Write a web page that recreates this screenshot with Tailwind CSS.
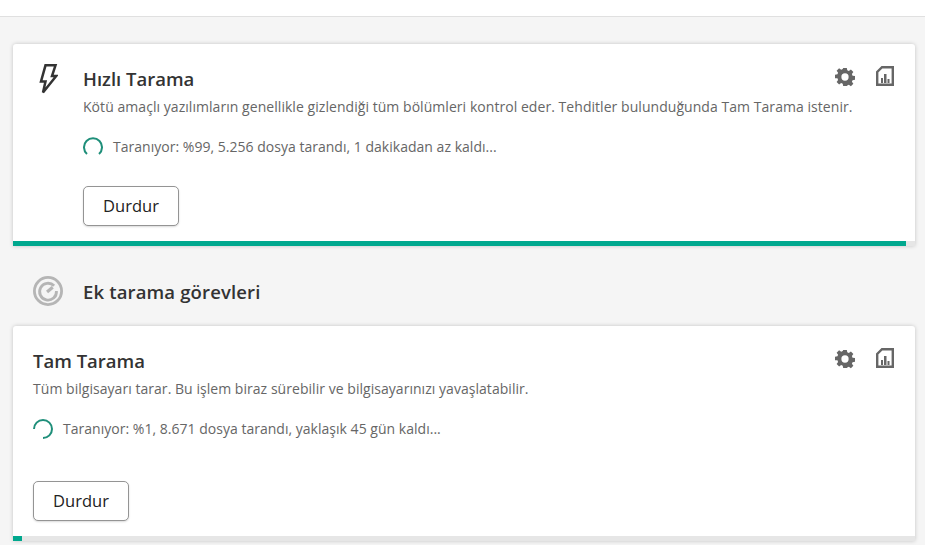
<!DOCTYPE html>
<html lang="tr">
<head>
  <meta charset="UTF-8">
  <title>Tarama</title>
  <script src="https://cdn.jsdelivr.net/npm/@tailwindcss/browser@4"></script>
</head>
<body class="h-[545px] w-[925px] overflow-hidden bg-[#f5f5f5] font-['Open_Sans',sans-serif]">

  <!-- Top bar -->
  <div class="h-[17px] border-b border-[#e0e0e0] bg-white"></div>

  <div class="pl-[13px] pr-[10px] pt-[27px]">

    <!-- Quick scan card -->
    <div class="flex h-[202px] flex-col rounded-t-[3px] bg-white shadow-[0_0_4px_rgba(0,0,0,0.2)]">
      <div class="flex flex-1 pl-[20px] pr-[21px]">
        <div class="w-[50px] pt-[20px]">
          <svg class="ml-[5px] h-[30px] w-[20px]" viewBox="0 0 20 30" fill="none" stroke="#333" stroke-width="2.5" stroke-linejoin="miter">
            <path d="M7.500 1.300h10L14 12h4.200L5 28.500l2.500-11H3z"/>
          </svg>
        </div>
        <div class="flex-1">
          <div class="flex items-start justify-between pt-[20px]">
            <h2 class="text-[18.500px] leading-[30px] font-[550] text-[#333]">Hızlı Tarama</h2>
            <div class="flex items-start gap-[21px] pt-[2px]">
              <svg class="mt-[1px] h-[20px] w-[20px]" viewBox="0 0 22 22" fill="#666">
                <path fill-rule="evenodd" d="M9 1h4l.5 2.700 1.700.7 2.300-1.600 2.700 2.700-1.600 2.300.7 1.700 2.700.5v4l-2.700.5-.7 1.700 1.600 2.300-2.700 2.700-2.300-1.600-1.700.7L13 21H9l-.5-2.700-1.700-.7-2.300 1.600-2.700-2.700 1.600-2.300-.7-1.700L0 12.500v-4l2.700-.5.7-1.700-1.600-2.300 2.700-2.700 2.300 1.600 1.700-.7zM11 7a4 4 0 1 0 0 8 4 4 0 0 0 0-8z"/>
              </svg>
              <svg class="h-[20px] w-[18px]" viewBox="0 0 18 20" fill="none">
                <path d="M6 1.200h10.800v17.600H1.200V6z" stroke="#666" stroke-width="2.400"/>
                <path d="M5 12h2v5H5zM8 8h2.500v9H8zM11.500 13h2v4h-2z" fill="#666"/>
              </svg>
            </div>
          </div>
          <p class="mt-[3px] text-[14px] leading-[20px] tracking-[0.05px] text-[#666]">Kötü amaçlı yazılımların genellikle gizlendiği tüm bölümleri kontrol eder. Tehditler bulunduğunda Tam Tarama istenir.</p>
          <div class="mt-[20px] flex items-center gap-[10px]">
            <svg class="h-[20px] w-[20px]" viewBox="0 0 20 20" fill="none" stroke="#1f8f7a" stroke-width="2">
              <path d="M4 17A9 9 0 1 1 16 17"/>
            </svg>
            <span class="text-[14px] leading-[20px] tracking-[0.02px] text-[#666]">Taranıyor: %99, 5.256 dosya tarandı, 1 dakikadan az kaldı...</span>
          </div>
          <button class="mt-[29px] h-[40px] w-[96px] rounded-[5px] border border-[#949494] bg-white text-[16.500px] font-medium text-[#222] shadow-[0_1px_2px_rgba(0,0,0,0.15)]">Durdur</button>
        </div>
      </div>
      <div class="h-[5px] bg-[#e6e6e6]">
        <div class="h-full w-[893px] bg-[#00a88e]"></div>
      </div>
    </div>

    <!-- Additional scans heading -->
    <div class="flex h-[80px] items-center pl-[20px] pt-[10px]">
      <div class="w-[50px]">
        <svg class="h-[30px] w-[30px]" viewBox="0 0 32 32" fill="none" stroke="#b5b5b5" stroke-width="3">
          <circle cx="16" cy="16" r="14.500"/>
          <path d="M22.500 10.500A9 9 0 1 0 25 16"/>
          <path d="M15 17l6-5" stroke-width="3.500"/>
        </svg>
      </div>
      <h2 class="mt-[2px] text-[18.500px] font-[550] tracking-[0.15px] text-[#333]">Ek tarama görevleri</h2>
    </div>

    <!-- Full scan card -->
    <div class="flex h-[215px] flex-col rounded-t-[3px] bg-white shadow-[0_0_4px_rgba(0,0,0,0.2)]">
      <div class="flex-1 pl-[20px] pr-[21px]">
        <div class="flex items-start justify-between pt-[20px]">
          <h2 class="text-[18.500px] leading-[30px] font-[550] text-[#333]">Tam Tarama</h2>
          <div class="flex items-start gap-[21px] pt-[2px]">
            <svg class="mt-[1px] h-[20px] w-[20px]" viewBox="0 0 22 22" fill="#666">
              <path fill-rule="evenodd" d="M9 1h4l.5 2.700 1.700.7 2.300-1.600 2.700 2.700-1.600 2.300.7 1.700 2.700.5v4l-2.700.5-.7 1.700 1.600 2.300-2.700 2.700-2.300-1.600-1.700.7L13 21H9l-.5-2.700-1.700-.7-2.300 1.600-2.700-2.700 1.600-2.300-.7-1.700L0 12.500v-4l2.700-.5.7-1.700-1.600-2.300 2.700-2.700 2.300 1.600 1.700-.7zM11 7a4 4 0 1 0 0 8 4 4 0 0 0 0-8z"/>
            </svg>
            <svg class="h-[20px] w-[18px]" viewBox="0 0 18 20" fill="none">
              <path d="M6 1.200h10.800v17.600H1.200V6z" stroke="#666" stroke-width="2.400"/>
              <path d="M5 12h2v5H5zM8 8h2.500v9H8zM11.500 13h2v4h-2z" fill="#666"/>
            </svg>
          </div>
        </div>
        <p class="mt-[3px] text-[14px] leading-[20px] tracking-[0.04px] text-[#666]">Tüm bilgisayarı tarar. Bu işlem biraz sürebilir ve bilgisayarınızı yavaşlatabilir.</p>
        <div class="mt-[20px] flex items-center gap-[10px]">
          <svg class="h-[20px] w-[20px]" viewBox="0 0 20 20" fill="none" stroke="#1f8f7a" stroke-width="2">
            <path d="M1 10A9 9 0 1 1 10 19"/>
          </svg>
          <span class="text-[14px] leading-[20px] tracking-[0.02px] text-[#666]">Taranıyor: %1, 8.671 dosya tarandı, yaklaşık 45 gün kaldı...</span>
        </div>
        <button class="mt-[42px] h-[40px] w-[96px] rounded-[5px] border border-[#949494] bg-white text-[16.500px] font-medium text-[#222] shadow-[0_1px_2px_rgba(0,0,0,0.15)]">Durdur</button>
      </div>
      <div class="h-[5px] bg-[#e6e6e6]">
        <div class="h-full w-[9px] bg-[#00a88e]"></div>
      </div>
    </div>
  </div>
</body>
</html>
